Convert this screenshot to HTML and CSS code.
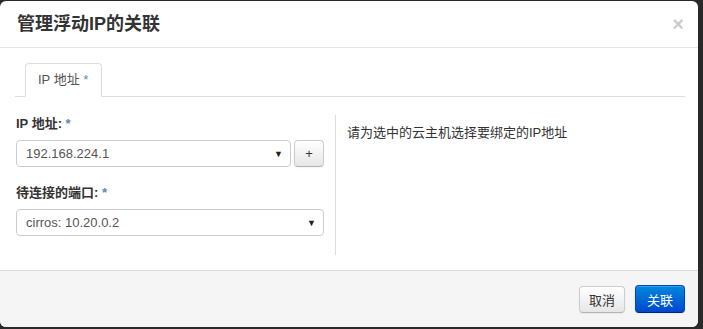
FILE: index.html
```html
<!DOCTYPE html>
<html lang="zh-CN">
<head>
  <meta charset="UTF-8" />
  <title>管理浮动IP的关联</title>
  <link rel="stylesheet" href="styles.css">
</head>
<body>

  <div class="modal">
    <div class="modal-header">
      <h3>管理浮动IP的关联</h3>
      <span class="close">×</span>
    </div>

    <div class="modal-body">
      <ul class="nav-tabs">
        <li class="active">IP 地址 <span class="req">*</span></li>
      </ul>

      <div class="tab-content">
        <div class="left">
          <label class="field-label">IP 地址: <span class="req">*</span></label>
          <div class="input-row">
            <div class="select grow">
              <span>192.168.224.1</span>
              <span class="caret">▼</span>
            </div>
            <button class="btn btn-plus">+</button>
          </div>

          <label class="field-label">待连接的端口: <span class="req">*</span></label>
          <div class="select">
            <span>cirros: 10.20.0.2</span>
            <span class="caret">▼</span>
          </div>
        </div>

        <div class="right">
          <p>请为选中的云主机选择要绑定的IP地址</p>
        </div>
      </div>
    </div>

    <div class="modal-footer">
      <button class="btn">取消</button>
      <button class="btn btn-primary">关联</button>
    </div>
  </div>

</body>
</html>
```

FILE: styles.css
```css
html, body {
  margin: 0;
  height: 100%;
}

body {
  background: #2a2a2a;
  font-family: "Liberation Sans", Arial, "Noto Sans CJK SC", sans-serif;
  font-size: 13px;
  color: #333;
  padding-top: 1px;
  box-sizing: border-box;
}

.modal {
  width: 698px;
  height: 326px;
  background: white;
  border-radius: 6px;
  overflow: hidden;
  display: flex;
  flex-direction: column;
}

.modal-header {
  height: 46px;
  flex-shrink: 0;
  border-bottom: 1px solid #e5e5e5;
  display: flex;
  align-items: center;
  justify-content: space-between;
  padding: 0 14px 0 17px;
}

.modal-header h3 {
  margin: 0;
  font-size: 18px;
  font-weight: bold;
  color: #333;
  line-height: 20px;
}

.close {
  font-size: 20px;
  font-weight: bold;
  color: #000;
  opacity: 0.2;
  line-height: 20px;
}

.modal-body {
  flex: 1;
  padding: 15px 13px 0 15px;
}

.nav-tabs {
  list-style: none;
  margin: 0;
  padding: 0 0 0 10px;
  border-bottom: 1px solid #ddd;
  display: flex;
}

.nav-tabs li {
  height: 32px;
  line-height: 32px;
  padding: 0 13px 0 12px;
  border: 1px solid #ddd;
  border-bottom-color: white;
  border-radius: 4px 4px 0 0;
  margin-bottom: -1px;
  color: #555;
  background: white;
}

.req {
  color: #5d88b5;
}

.tab-content {
  display: flex;
  padding-top: 18px;
}

.left {
  width: 308px;
  padding-right: 11px;
  border-right: 1px solid #ddd;
  margin-left: 1px;
  height: 140px;
}

.field-label {
  display: block;
  font-weight: bold;
  line-height: 18px;
  margin: 0 0 7px;
}

.input-row {
  display: flex;
  gap: 3px;
  margin-bottom: 17px;
}

.select {
  height: 27px;
  box-sizing: border-box;
  border: 1px solid #ccc;
  border-radius: 4px;
  display: flex;
  align-items: center;
  justify-content: space-between;
  padding: 0 7px 0 9px;
  color: #555;
  background: white;
}

.grow {
  flex: 1;
}

.caret {
  font-size: 9px;
  color: #222;
}

.btn {
  font-family: inherit;
  font-size: 13px;
  color: #333;
  height: 27px;
  padding: 0 9px;
  border: 1px solid #ccc;
  border-bottom-color: #b3b3b3;
  border-radius: 4px;
  background: linear-gradient(#ffffff, #e6e6e6);
  box-shadow: inset 0 1px 0 rgba(255, 255, 255, 0.2), 0 1px 2px rgba(0, 0, 0, 0.05);
}

.btn-plus {
  width: 30px;
  padding: 0;
}

.right {
  padding-left: 11px;
}

.right p {
  margin: 0;
  line-height: 20px;
  margin-top: 8px;
}

.modal-footer {
  height: 56px;
  flex-shrink: 0;
  background: #f5f5f5;
  border-top: 1px solid #ddd;
  display: flex;
  justify-content: flex-end;
  align-items: center;
  gap: 10px;
  padding: 0 13px 0 0;
}

.btn-primary {
  color: white;
  background: linear-gradient(#0088dd, #0048cc);
  border-color: #0044cc #0044cc #002a80;
  height: 28px;
  padding: 0 11px;
}
```
